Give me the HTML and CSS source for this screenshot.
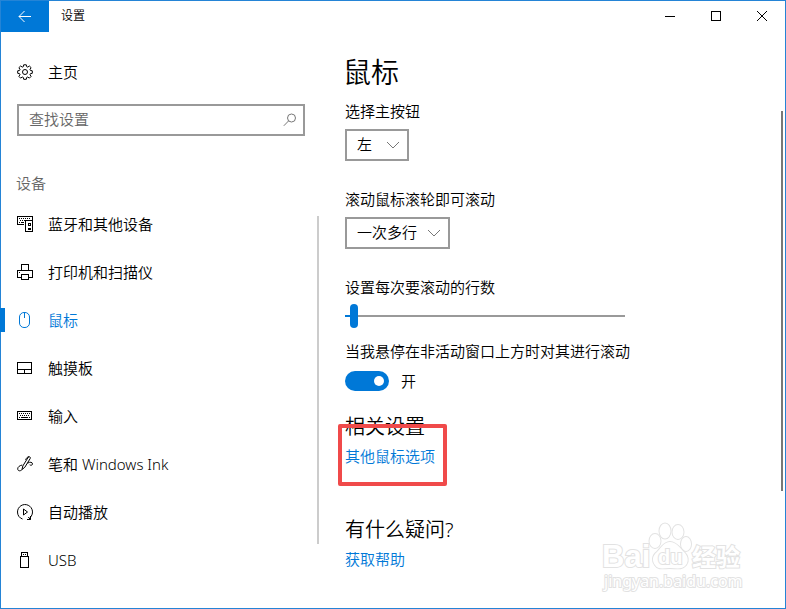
FILE: index.html
```html
<!DOCTYPE html>
<html lang="zh-CN">
<head>
<meta charset="utf-8">
<meta name="viewport" content="width=device-width, initial-scale=1">
<title>设置</title>
<link rel="stylesheet" href="styles.css">
</head>
<body>
<div class="window">
  <header class="titlebar">
    <button class="back" type="button" aria-label="返回">
      <svg width="14" height="14" viewBox="0 0 14 14"><path d="M1 6.500h12M6.500 1 1 6.500 6.500 12"/></svg>
    </button>
    <span class="caption">设置</span>
    <div class="controls">
      <button type="button" aria-label="最小化"><svg class="crisp" width="10" height="10" viewBox="0 0 10 10"><path d="M0 5.500h10"/></svg></button>
      <button type="button" aria-label="最大化"><svg class="crisp" width="10" height="10" viewBox="0 0 10 10"><path d="M.5.5h9v9h-9z"/></svg></button>
      <button type="button" aria-label="关闭"><svg width="10" height="10" viewBox="0 0 10 10"><path d="M0 0l10 10M10 0 0 10"/></svg></button>
    </div>
  </header>
  <div class="columns">
    <aside class="sidebar">
      <a class="item home" href="#home">
        <svg width="16" height="16" viewBox="0 0 16 16"><path d="M6.700.8h2.600l.4 1.900 1 .4 1.700-1.100 1.700 1.700-1.100 1.700.4 1 1.900.4v2.500l-1.900.4-.4 1 1.100 1.700-1.700 1.700-1.700-1.100-1 .4-.4 1.900H6.700l-.4-1.900-1-.4-1.700 1.100-1.700-1.700L3 10.700l-.4-1-1.900-.4V6.800l1.900-.4.4-1-1.100-1.700L3.600 2l1.700 1.100 1-.4z"/><circle cx="8" cy="8" r="2.500"/></svg>
        <span>主页</span>
      </a>
      <form class="search" role="search">
        <input type="search" placeholder="查找设置" aria-label="查找设置">
        <button type="button" aria-label="搜索"><svg width="14" height="14" viewBox="0 0 14 14"><circle cx="8.500" cy="5" r="4"/><path d="M5.700 7.800.8 12.800"/></svg></button>
      </form>
      <h2 class="group">设备</h2>
      <nav class="nav">
        <a class="item" href="#bluetooth">
          <svg class="crisp" width="16" height="16" viewBox="0 0 16 16"><path d="M7 8.500H.5v-8h15v3M2 2.500h1m1 0h1m1 0h1m1 0h1m1 0h1m1 0h1M3 4.500h1m1 0h1m1 0h1M2 6.500h1m1 0h3M8.500 4.500h7v11h-7zM11 7.500h2v2h-2zM11 12.500h2v1h-2z"/></svg>
          <span>蓝牙和其他设备</span>
        </a>
        <a class="item" href="#printers">
          <svg class="crisp" width="16" height="16" viewBox="0 0 16 16"><path d="M4.500 6.500v-6h7v6M4 13.500H.5v-7h15v7H12M4.500 10.500h7v5h-7zM2 8.500h1"/></svg>
          <span>打印机和扫描仪</span>
        </a>
        <a class="item active" href="#mouse" aria-current="page">
          <svg width="16" height="16" viewBox="0 0 16 16"><rect x="2.500" y=".5" width="10" height="15" rx="4.500"/><path d="M7.500 1v5"/></svg>
          <span>鼠标</span>
        </a>
        <a class="item" href="#touchpad">
          <svg class="crisp" width="16" height="16" viewBox="0 0 16 16"><path d="M.5 2.500h14v11H.5zM1 9.500h13M7.500 10v3"/></svg>
          <span>触摸板</span>
        </a>
        <a class="item" href="#typing">
          <svg class="crisp" width="16" height="16" viewBox="0 0 16 16"><path d="M.5 3.500h14v8H.5zM2 5.500h1m1 0h1m1 0h1m1 0h1m1 0h1m1 0h1M3 7.500h1m1 0h1m1 0h1m1 0h1m1 0h1M2 9.500h1m1 0h7m1 0h1"/></svg>
          <span>输入</span>
        </a>
        <a class="item" href="#pen">
          <svg width="16" height="16" viewBox="0 0 16 16"><path d="M5 13.500 5.800 10l5.400-8.700c1-1.300 2.700-.2 2 1.200L7.800 11.300zM8.500 3.800C9.600 1.800 10.800.5 12 .7M5.200 9C2.500 9.600.7 11 .7 12.900c0 2.100 2.600 2.700 4.300.6M10.500 7.200c2.500-1.700 5-1 5 .7 0 1.300-1.600 1.800-2.800.9"/></svg>
          <span>笔和 Windows Ink</span>
        </a>
        <a class="item" href="#autoplay">
          <svg width="16" height="16" viewBox="0 0 16 16"><path d="M5.500 15C2.400 14 .5 11.300.5 8a7.500 7.500 0 1 1 12.300 5.800M10 15.500h3.500V12M13.500 15.500l-2.300-2.300M6.500 5v6l4-3z"/></svg>
          <span>自动播放</span>
        </a>
        <a class="item" href="#usb">
          <svg class="crisp" width="16" height="16" viewBox="0 0 16 16"><path d="M4.500 4V.5h6V4M3.500 4.500h8v11h-8zM6 2.500h1m1 0h1"/></svg>
          <span>USB</span>
        </a>
      </nav>
    </aside>
    <main class="content">
      <h1>鼠标</h1>
      <div class="field">
        <label for="primary">选择主按钮</label>
        <div class="dropdown">
          <select id="primary"><option>左</option></select>
          <svg width="12" height="8" viewBox="0 0 12 8"><path d="M0 1l6 6 6-6"/></svg>
        </div>
      </div>
      <div class="field">
        <label for="wheel">滚动鼠标滚轮即可滚动</label>
        <div class="dropdown">
          <select id="wheel"><option>一次多行</option></select>
          <svg width="12" height="8" viewBox="0 0 12 8"><path d="M0 1l6 6 6-6"/></svg>
        </div>
      </div>
      <div class="field">
        <label for="lines">设置每次要滚动的行数</label>
        <input class="slider" id="lines" type="range" min="1" max="100" value="3">
      </div>
      <div class="field hover">
        <label for="inactive">当我悬停在非活动窗口上方时对其进行滚动</label>
        <div class="switch"><input id="inactive" type="checkbox" role="switch" checked><span>开</span></div>
      </div>
      <section class="related">
        <h2>相关设置</h2>
        <div class="marked"><a href="#more">其他鼠标选项</a></div>
      </section>
      <section class="help">
        <h2>有什么疑问?</h2>
        <a href="#help">获取帮助</a>
      </section>
    </main>
  </div>
  <svg class="watermark" width="144" height="72" viewBox="0 0 144 72" aria-hidden="true">
    <text class="brand" x="2" y="46">Bai</text>
    <g class="paw">
      <ellipse cx="55" cy="20" rx="5.500" ry="7"/><ellipse cx="65" cy="10" rx="5.500" ry="7.500"/>
      <ellipse cx="78" cy="11" rx="5.500" ry="7"/><ellipse cx="86" cy="23" rx="5" ry="7"/>
      <path d="M70 21c-6 0-9 6-13 10-5 4-5 9-2 13 3 5 9 3 15 3s12 2 16-3c3-4 2-9-2-13-4-4-8-10-14-10z"/>
    </g>
    <text class="du" x="58" y="43">du</text>
    <text class="cn" x="92" y="45">经验</text>
    <text class="site" x="4" y="66">jingyan.baidu.com</text>
  </svg>
</div>
</body>
</html>
```
FILE: styles.css
```css
* {
  box-sizing: border-box;
}

body {
  margin: 0;
  color: #000;
  background: #fff;
  font: 350 15px/20px "Noto Sans", "Noto Sans CJK SC", sans-serif;
}

button,
input,
select {
  margin: 0;
  padding: 0;
  border: 0;
  background: none;
  color: inherit;
  font: inherit;
}

svg {
  flex: none;
  fill: none;
  stroke: currentColor;
}

.crisp {
  shape-rendering: crispEdges;
}

a {
  color: #0078d7;
  text-decoration: none;
}

h1,
h2 {
  margin: 0;
  font-weight: 350;
}

.window {
  position: relative;
  min-height: 100vh;
  border: 1px solid #2484d6;
}

.titlebar {
  display: flex;
  height: 31px;
}

.back {
  display: grid;
  place-items: center;
  width: 48px;
  background: #0078d7;
  color: #fff;
}

.caption {
  flex: 1;
  padding: 5px 12px;
  font-size: 12px;
}

.controls {
  display: flex;
  height: 30px;
}

.controls button {
  display: grid;
  place-items: center;
  width: 46px;
}

.columns {
  display: flex;
}

.sidebar {
  position: relative;
  flex: none;
  width: 320px;
  padding-top: 16px;
}

.item {
  display: flex;
  align-items: center;
  gap: 15px;
  height: 48px;
  padding-left: 16px;
  color: #000;
}

.search {
  display: flex;
  height: 32px;
  margin: 8px 16px 0;
  border: 2px solid #999;
}

.search input {
  flex: 1;
  min-width: 0;
  padding: 0 0 2px 10px;
  outline: 0;
}

.search input::placeholder {
  color: #666;
}

.search button {
  display: grid;
  place-items: center;
  width: 26px;
  color: #777;
}

.group {
  margin: 37px 0 7px;
  padding-left: 15px;
  color: #666;
  font-size: 15px;
}

.nav::after {
  content: "";
  position: absolute;
  top: 184px;
  right: 2px;
  width: 2px;
  height: 328px;
  background: #ccc;
}

.item.active {
  position: relative;
  color: #0078d7;
}

.active::before {
  content: "";
  position: absolute;
  left: -1px;
  width: 5px;
  height: 24px;
  background: #0078d7;
}

.content {
  position: relative;
  flex: 1;
  min-width: 0;
  padding: 20px 24px 32px;
}

.content::after {
  content: "";
  position: absolute;
  top: 79px;
  right: 2px;
  width: 2px;
  height: 380px;
  background: #777;
}

h1 {
  margin: 0 0 9px -2px;
  font-size: 28px;
  line-height: 40px;
}

.field {
  display: grid;
  justify-items: start;
  gap: 8px;
  margin-bottom: 28px;
}

.dropdown {
  display: grid;
  align-items: center;
}

.dropdown > * {
  grid-area: 1 / 1;
}

.dropdown select {
  min-width: 64px;
  height: 32px;
  padding: 0 30px 2px 10px;
  border: 2px solid #999;
  border-radius: 0;
  appearance: none;
}

.dropdown svg {
  justify-self: end;
  margin-right: 10px;
  color: #777;
  pointer-events: none;
}

.slider {
  width: 100%;
  max-width: 280px;
  height: 22px;
  background: linear-gradient(90deg, #0078d7 8px, #999 8px) center / 100% 2px no-repeat;
  appearance: none;
}

.slider::-webkit-slider-thumb {
  width: 8px;
  height: 24px;
  border-radius: 4px;
  background: #0078d7;
  appearance: none;
}

.hover {
  gap: 10px;
  margin: -14px 0 22px;
}

.switch {
  display: flex;
  gap: 12px;
}

.switch input {
  display: flex;
  align-items: center;
  justify-content: flex-end;
  width: 44px;
  height: 20px;
  padding-right: 5px;
  border-radius: 10px;
  background: #0078d7;
  appearance: none;
}

.switch input::after {
  content: "";
  width: 10px;
  height: 10px;
  border-radius: 50%;
  background: #fff;
}

.content h2 {
  margin-bottom: 5px;
  font-size: 20px;
  line-height: 28px;
}

.marked {
  position: relative;
  width: fit-content;
}

.marked::after {
  content: "";
  position: absolute;
  inset: -22px -12px -20px -7px;
  border: 4px solid #f04a4a;
  border-radius: 2px;
  pointer-events: none;
}

.help {
  margin-top: 50px;
}

.watermark {
  position: absolute;
  right: 41px;
  bottom: 15px;
  fill: #fff;
  stroke: #e2e2e2;
  stroke-width: 2px;
  paint-order: stroke;
  pointer-events: none;
}

.brand {
  font: 700 31px "Liberation Sans", sans-serif;
}

.du {
  font: 700 20px "Liberation Sans", sans-serif;
}

.cn {
  font: 700 24px "Noto Sans CJK SC", sans-serif;
}

.site {
  font: 400 16px "Noto Sans", sans-serif;
}
```
